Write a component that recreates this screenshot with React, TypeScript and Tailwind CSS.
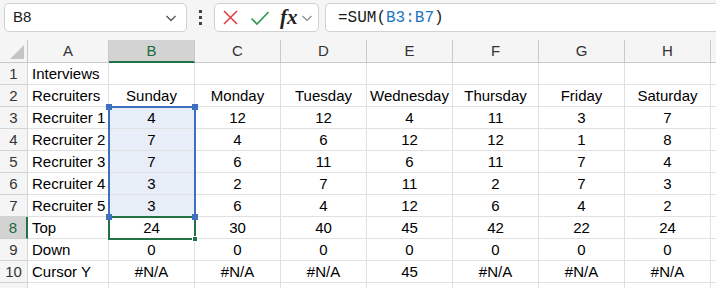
import React from 'react';

const COLS = ['A', 'B', 'C', 'D', 'E', 'F', 'G', 'H'];

// rows of the sheet, column A first
const ROWS: string[][] = [
  ['Interviews', '', '', '', '', '', '', ''],
  ['Recruiters', 'Sunday', 'Monday', 'Tuesday', 'Wednesday', 'Thursday', 'Friday', 'Saturday'],
  ['Recruiter 1', '4', '12', '12', '4', '11', '3', '7'],
  ['Recruiter 2', '7', '4', '6', '12', '12', '1', '8'],
  ['Recruiter 3', '7', '6', '11', '6', '11', '7', '4'],
  ['Recruiter 4', '3', '2', '7', '11', '2', '7', '3'],
  ['Recruiter 5', '3', '6', '4', '12', '6', '4', '2'],
  ['Top', '24', '30', '40', '45', '42', '22', '24'],
  ['Down', '0', '0', '0', '0', '0', '0', '0'],
  ['Cursor Y', '#N/A', '#N/A', '#N/A', '45', '#N/A', '#N/A', '#N/A'],
];

function FormulaBar() {
  return (
    <div className="flex h-[40px] items-start gap-0 bg-[#f5f5f5] pt-[3px]">
      {/* name box */}
      <div className="ml-[4px] flex h-[29px] w-[183px] items-center justify-between rounded-[5px] border border-[#d1d1d1] bg-white pl-[8px] pr-[8px]">
        <span className="text-[15px] text-[#1a1a1a]">B8</span>
        <svg width="14" height="14" viewBox="0 0 14 14" fill="none" stroke="#555" strokeWidth="1.3">
          <path d="M2.5 5l4.5 4.5L11.5 5" />
        </svg>
      </div>
      {/* kebab */}
      <div className="flex h-[29px] w-[27px] flex-col items-center justify-center gap-[3px]">
        <span className="h-[3px] w-[3px] bg-[#444]" />
        <span className="h-[3px] w-[3px] bg-[#444]" />
        <span className="h-[3px] w-[3px] bg-[#444]" />
      </div>
      {/* cancel / enter / fx */}
      <div className="flex h-[29px] w-[105px] items-center rounded-[5px] border border-[#d1d1d1] bg-white pl-[7px]">
        <svg width="17" height="17" viewBox="0 0 17 17" fill="none" stroke="#e0393e" strokeWidth="1.5">
          <path d="M2 2l13 13M15 2L2 15" />
        </svg>
        <svg className="ml-[11px]" width="20" height="16" viewBox="0 0 20 16" fill="none" stroke="#2f9a4f" strokeWidth="1.7">
          <path d="M1.5 8.5l5.5 5.5L18.5 2" />
        </svg>
        <span className="ml-[10px] font-['Liberation_Serif',serif] text-[21px] italic leading-none text-[#222]">
          <span className="font-semibold">fx</span>
        </span>
        <svg className="ml-[3px]" width="12" height="12" viewBox="0 0 12 12" fill="none" stroke="#888" strokeWidth="1.2">
          <path d="M1.5 4l4.5 4.5L10.5 4" />
        </svg>
      </div>
      {/* formula */}
      <div className="ml-[6px] flex h-[29px] flex-1 items-center rounded-l-[5px] border border-r-0 border-[#d1d1d1] bg-white pl-[12px]">
        <span className="font-['Liberation_Mono',monospace] text-[16px] text-[#1a1a1a]">
          =SUM(<span className="text-[#1f77c0]">B3:B7</span>)
        </span>
      </div>
    </div>
  );
}

function Sheet() {
  return (
    <div className="relative grid grid-cols-[28px_81px_repeat(7,86px)_1fr] grid-rows-[23px_repeat(11,22px)] text-[15px] text-black">
      {/* corner */}
      <div className="relative border-b border-r border-[#c9c9c9] bg-[#f5f5f5]">
        <div className="absolute bottom-[3px] right-[3px] h-0 w-0 border-b-[14px] border-l-[14px] border-b-[#c4c4c4] border-l-transparent" />
      </div>
      {COLS.map((c) => (
        <div
          key={c}
          className={
            c === 'B'
              ? 'flex items-center justify-center border-b-2 border-r border-b-[#217346] border-r-[#c9c9c9] bg-[#d3d3d3] pt-[2px] text-[#1d6b40]'
              : 'flex items-center justify-center border-b border-r border-[#c9c9c9] bg-[#f5f5f5] pt-[1px] text-[#333]'
          }
        >
          {c}
        </div>
      ))}
      <div className="border-b border-[#c9c9c9] bg-[#f5f5f5]" />

      {ROWS.map((row, i) => {
        const n = i + 1;
        const active = n === 8;
        return (
          <React.Fragment key={n}>
            <div
              className={
                active
                  ? 'flex items-center justify-center border-b border-r-2 border-b-[#c9c9c9] border-r-[#217346] bg-[#d3d3d3] pt-[2px] text-[#1d6b40]'
                  : 'flex items-center justify-center border-b border-r border-[#d4d4d4] bg-[#f5f5f5] pt-[2px] text-[#333]'
              }
            >
              {n}
            </div>
            {row.map((v, j) => {
              const inRange = j === 1 && n >= 3 && n <= 7;
              return (
                <div
                  key={j}
                  className={
                    'flex items-center overflow-visible whitespace-nowrap border-b border-r border-[#e1e1e1] pt-[2px] ' +
                    (j === 0 ? 'justify-start pl-[4px] ' : 'justify-center ') +
                    (inRange ? 'bg-[#e8eef8]' : 'bg-white')
                  }
                >
                  {v}
                </div>
              );
            })}
            <div className="border-b border-[#e1e1e1] bg-white" />
          </React.Fragment>
        );
      })}

      {/* row 11, partially visible */}
      <div className="border-r border-[#d4d4d4] bg-[#f5f5f5]" />
      {COLS.map((c) => (
        <div key={c} className="border-r border-[#e1e1e1] bg-white" />
      ))}
      <div className="bg-white" />

      {/* selected range B3:B7 */}
      <div className="pointer-events-none absolute left-[108px] top-[66px] h-[112px] w-[88px] border-2 border-[#3f6fbf]">
        <span className="absolute -left-[4px] -top-[4px] h-[6px] w-[6px] bg-[#3f6fbf]" />
        <span className="absolute -right-[4px] -top-[4px] h-[6px] w-[6px] bg-[#3f6fbf]" />
      </div>
      {/* active cell B8 */}
      <div className="pointer-events-none absolute left-[108px] top-[176px] h-[24px] w-[88px] border-2 border-[#217346]">
        <span className="absolute -left-[4px] -top-[4px] h-[6px] w-[6px] bg-[#3f6fbf]" />
        <span className="absolute -right-[4px] -top-[4px] h-[6px] w-[6px] bg-[#3f6fbf]" />
        <span className="absolute -bottom-[4px] -right-[4px] h-[6px] w-[6px] border border-white bg-[#217346]" />
      </div>
    </div>
  );
}

export default function App() {
  return (
    <div className="h-[288px] w-[716px] overflow-hidden bg-white font-['Liberation_Sans',Arial,sans-serif]">
      <FormulaBar />
      <Sheet />
    </div>
  );
}
